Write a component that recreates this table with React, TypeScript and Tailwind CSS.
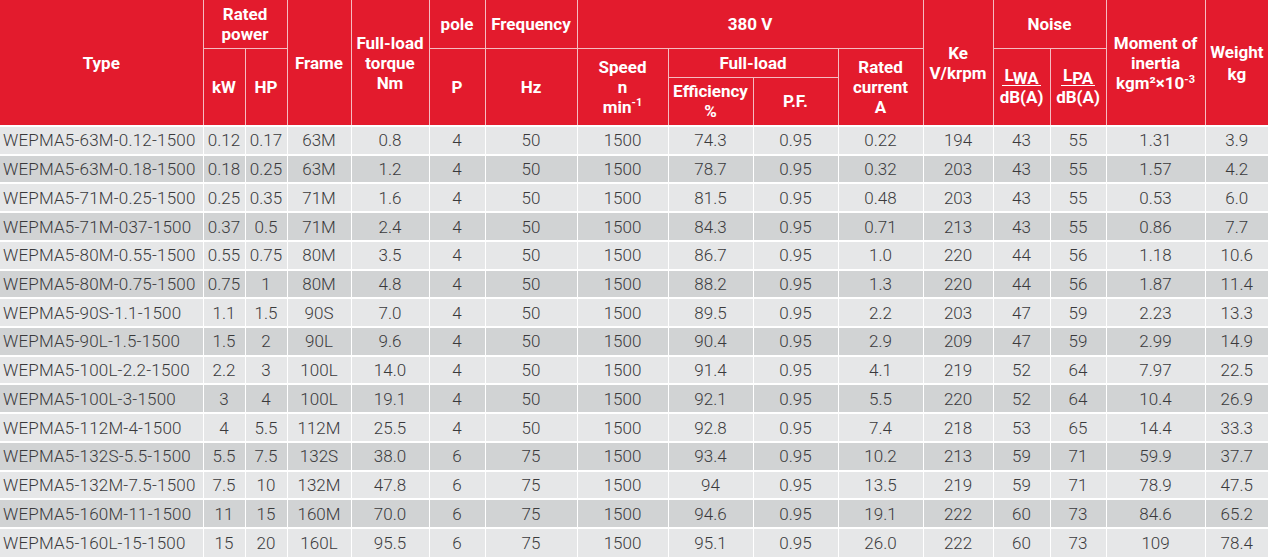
import React from 'react'

type Row = [string, string, string, string, string, string, string, string, string, string, string, string, string, string, string, string]

const ROWS: Row[] = [
  ['WEPMA5-63M-0.12-1500', '0.12', '0.17', '63M', '0.8', '4', '50', '1500', '74.3', '0.95', '0.22', '194', '43', '55', '1.31', '3.9'],
  ['WEPMA5-63M-0.18-1500', '0.18', '0.25', '63M', '1.2', '4', '50', '1500', '78.7', '0.95', '0.32', '203', '43', '55', '1.57', '4.2'],
  ['WEPMA5-71M-0.25-1500', '0.25', '0.35', '71M', '1.6', '4', '50', '1500', '81.5', '0.95', '0.48', '203', '43', '55', '0.53', '6.0'],
  ['WEPMA5-71M-037-1500', '0.37', '0.5', '71M', '2.4', '4', '50', '1500', '84.3', '0.95', '0.71', '213', '43', '55', '0.86', '7.7'],
  ['WEPMA5-80M-0.55-1500', '0.55', '0.75', '80M', '3.5', '4', '50', '1500', '86.7', '0.95', '1.0', '220', '44', '56', '1.18', '10.6'],
  ['WEPMA5-80M-0.75-1500', '0.75', '1', '80M', '4.8', '4', '50', '1500', '88.2', '0.95', '1.3', '220', '44', '56', '1.87', '11.4'],
  ['WEPMA5-90S-1.1-1500', '1.1', '1.5', '90S', '7.0', '4', '50', '1500', '89.5', '0.95', '2.2', '203', '47', '59', '2.23', '13.3'],
  ['WEPMA5-90L-1.5-1500', '1.5', '2', '90L', '9.6', '4', '50', '1500', '90.4', '0.95', '2.9', '209', '47', '59', '2.99', '14.9'],
  ['WEPMA5-100L-2.2-1500', '2.2', '3', '100L', '14.0', '4', '50', '1500', '91.4', '0.95', '4.1', '219', '52', '64', '7.97', '22.5'],
  ['WEPMA5-100L-3-1500', '3', '4', '100L', '19.1', '4', '50', '1500', '92.1', '0.95', '5.5', '220', '52', '64', '10.4', '26.9'],
  ['WEPMA5-112M-4-1500', '4', '5.5', '112M', '25.5', '4', '50', '1500', '92.8', '0.95', '7.4', '218', '53', '65', '14.4', '33.3'],
  ['WEPMA5-132S-5.5-1500', '5.5', '7.5', '132S', '38.0', '6', '75', '1500', '93.4', '0.95', '10.2', '213', '59', '71', '59.9', '37.7'],
  ['WEPMA5-132M-7.5-1500', '7.5', '10', '132M', '47.8', '6', '75', '1500', '94', '0.95', '13.5', '219', '59', '71', '78.9', '47.5'],
  ['WEPMA5-160M-11-1500', '11', '15', '160M', '70.0', '6', '75', '1500', '94.6', '0.95', '19.1', '222', '60', '73', '84.6', '65.2'],
  ['WEPMA5-160L-15-1500', '15', '20', '160L', '95.5', '6', '75', '1500', '95.1', '0.95', '26.0', '222', '60', '73', '109', '78.4'],
]

const WIDTHS = [203, 42, 42, 64, 78, 56, 92, 91, 85, 85, 85, 70, 57, 56, 99, 63]

const th = 'border border-[#f5bcc1] bg-[#e31b2d] text-white font-bold text-[17px] leading-[20px] text-center align-middle p-0'

function NoiseHead({ sub }: { sub: string }) {
  return (
    <span className="inline-flex flex-col items-center">
      <span className="border-b border-white px-[2px] leading-[19px]">
        L<sub className="text-[17px] relative top-[3px] align-baseline">{sub}</sub>
      </span>
      <span className="leading-[22px]">dB(A)</span>
    </span>
  )
}

export default function App() {
  return (
    <div className="w-[1270px] h-[557px] overflow-hidden bg-white" style={{ fontFamily: 'Roboto, "Liberation Sans", sans-serif' }}>
      <table className="table-fixed border-collapse w-[1268px]">
        <colgroup>
          {WIDTHS.map((w, i) => (
            <col key={i} style={{ width: w }} />
          ))}
        </colgroup>
        <thead>
          <tr className="h-[48px]">
            <th rowSpan={3} className={`${th} border-l-0 border-t-0`}>Type</th>
            <th colSpan={2} className={`${th} border-t-0`}>Rated<br />power</th>
            <th rowSpan={3} className={`${th} border-t-0`}>Frame</th>
            <th rowSpan={3} className={`${th} border-t-0`}>Full-load<br />torque<br />Nm</th>
            <th className={`${th} border-t-0`}>pole</th>
            <th className={`${th} border-t-0`}>Frequency</th>
            <th colSpan={4} className={`${th} border-t-0`}>380 V</th>
            <th rowSpan={3} className={`${th} border-t-0`}>Ke<br />V/krpm</th>
            <th colSpan={2} className={`${th} border-t-0`}>Noise</th>
            <th rowSpan={3} className={`${th} border-t-0`}>
              Moment of<br />inertia<br />
              <span>kgm²×10<sup className="text-[11px] -top-[6px]">-3</sup></span>
            </th>
            <th rowSpan={3} className={`${th} border-t-0 border-r-0 leading-[22px]`}>Weight<br />kg</th>
          </tr>
          <tr className="h-[29px]">
            <th rowSpan={2} className={th}>kW</th>
            <th rowSpan={2} className={th}>HP</th>
            <th rowSpan={2} className={th}>P</th>
            <th rowSpan={2} className={th}>Hz</th>
            <th rowSpan={2} className={th}>
              Speed<br />n<br />
              <span>min<sup className="text-[11px] -top-[7px]">-1</sup></span>
            </th>
            <th colSpan={2} className={th}>Full-load</th>
            <th rowSpan={2} className={th}>Rated<br />current<br />A</th>
            <th rowSpan={2} className={th}><NoiseHead sub="WA" /></th>
            <th rowSpan={2} className={th}><NoiseHead sub="PA" /></th>
          </tr>
          <tr className="h-[49px]">
            <th className={th}>Efficiency<br />%</th>
            <th className={th}>P.F.</th>
          </tr>
        </thead>
        <tbody className="text-[17px] text-[#3a3a3c] font-light">
          {ROWS.map((row, r) => (
            <tr key={r} className={`h-[28.73px] ${r % 2 === 0 ? 'bg-[#e6e7e8]' : 'bg-[#d1d3d4]'}`}>
              {row.map((cell, c) => (
                <td
                  key={c}
                  className={`border-t-2 border-white p-0 leading-[20px] ${c === 0 ? 'text-left pl-[3px] tracking-[0.2px]' : 'text-center border-l'}`}
                >
                  {cell}
                </td>
              ))}
            </tr>
          ))}
        </tbody>
      </table>
    </div>
  )
}
